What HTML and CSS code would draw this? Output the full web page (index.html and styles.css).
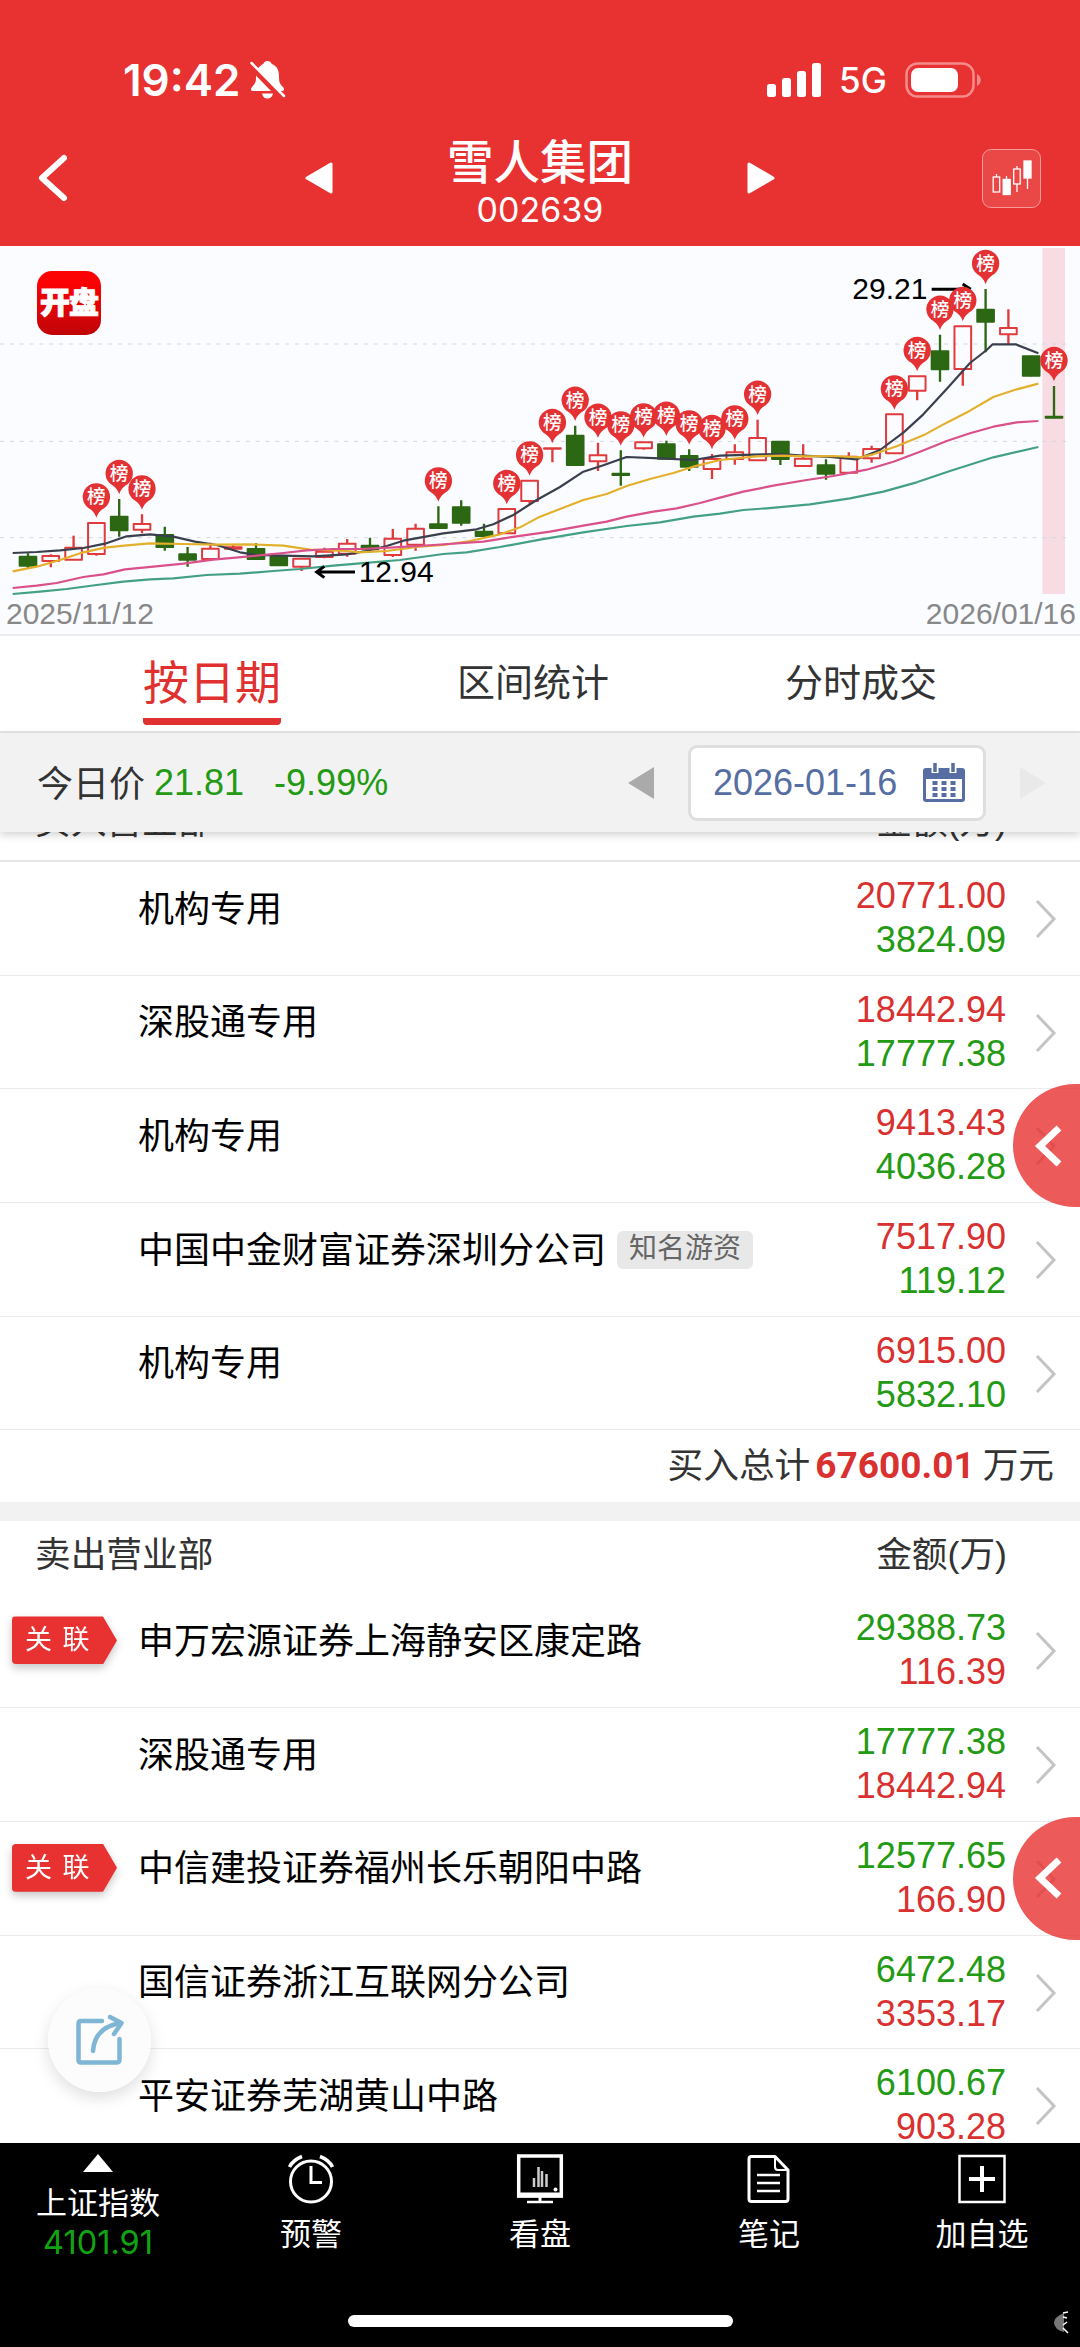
FILE: index.html
```html
<!DOCTYPE html>
<html lang="zh-CN">
<head>
    <meta charset="UTF-8">
    <meta name="viewport" content="width=device-width, initial-scale=1.0">
    <title>雪人集团 002639</title>
    <link rel="stylesheet" href="styles.css">
</head>
<body>

<!-- shared icons -->
<svg width="0" height="0" class="sprite">
    <symbol id="more" viewBox="0 0 22 40"><path d="M2 2 L19 20 L2 38" fill="none" stroke="#c4c4c4" stroke-width="3"/></symbol>
    <symbol id="pull" viewBox="0 0 28 42"><path d="M25 3 L6 21 L25 39" fill="none" stroke="#fff" stroke-width="7"/></symbol>
</svg>

<header class="header">
    <div class="status">
        <span class="time">19:42</span>
        <svg class="bell" width="36" height="40" viewBox="0 0 36 40">
            <path d="M17.500 1 C20 1 21.500 2.500 21.700 4 C27 6 29 10 29 16 C29 23 30 24 33 27 C35 30 34 31 32 31 H3 C1 31 0 29 2 27 C6 23 6 21 6 16 C6 10 9 6 13.300 4 C13.500 2.500 15 1 17.500 1Z M12 33.500 H23 C22 37.500 20 38.500 17.500 38.500 C15 38.500 13 37.500 12 33.500Z" fill="#fff"/>
            <path d="M0 5 L32 38" stroke="#e83131" stroke-width="6"/>
            <path d="M1.500 3 L34 36" stroke="#fff" stroke-width="2.500" stroke-linecap="round"/>
        </svg>
        <svg class="signal" width="54" height="34" viewBox="0 0 54 34" fill="#fff">
            <rect x="0" y="21" width="9" height="13" rx="2.500"/>
            <rect x="15" y="15" width="9" height="19" rx="2.500"/>
            <rect x="30" y="8" width="9" height="26" rx="2.500"/>
            <rect x="45" y="0" width="9" height="34" rx="2.500"/>
        </svg>
        <span class="net">5G</span>
        <svg class="battery" width="78" height="36" viewBox="0 0 78 36">
            <rect x="1.500" y="1.500" width="67" height="33" rx="11" fill="none" stroke="#f58a8a" stroke-width="2.500"/>
            <rect x="6" y="6" width="47" height="24" rx="7" fill="#fff"/>
            <path d="M72 12 C77 14 77 22 72 24Z" fill="#f58a8a"/>
        </svg>
    </div>
    <div class="titlebar">
        <svg class="back" width="34" height="50" viewBox="0 0 34 50"><path d="M28 5 L6 25 L28 45" fill="none" stroke="#fff" stroke-width="6" stroke-linecap="round" stroke-linejoin="round"/></svg>
        <svg class="prev" width="28" height="32" viewBox="0 0 28 32"><path d="M26 2 V30 L2 16Z" fill="#fff" stroke="#fff" stroke-width="3" stroke-linejoin="round"/></svg>
        <div class="stock">
            <h1>雪人集团</h1>
            <span>002639</span>
        </div>
        <svg class="next" width="28" height="32" viewBox="0 0 28 32"><path d="M2 2 V30 L26 16Z" fill="#fff" stroke="#fff" stroke-width="3" stroke-linejoin="round"/></svg>
        <div class="kline-btn">
            <svg width="40" height="36" viewBox="0 0 40 36" stroke="#fff" stroke-width="1.300" fill="none">
                <path d="M4.500 14 V17 M14.500 16 V19 M25 6 V9 M25 24 V32 M35.500 18 V29"/>
                <rect x="1.200" y="17" width="6.500" height="15"/>
                <rect x="11.200" y="19.500" width="7" height="15" fill="#fff"/>
                <rect x="21.700" y="9" width="6.500" height="15"/>
                <rect x="32" y="1" width="7" height="17" fill="#fff"/>
            </svg>
        </div>
    </div>
</header>

<section class="chart">
    <svg id="kline" viewBox="0 3 3240 1164">
        <defs>
            <symbol id="pin" viewBox="-42 -42 84 108" overflow="visible">
                <path d="M0 63 C-6 46 -14 40 -25 33 A41 41 0 1 1 25 33 C14 40 6 46 0 63Z" fill="#e33134"/>
                <text y="20" class="pin-text">榜</text>
            </symbol>
        </defs>
        <rect x="3127" y="9" width="68" height="1038" fill="#f7dde3"/>
        <g stroke="#d3d7dc" stroke-width="3" stroke-dasharray="12 17.500">
            <path d="M0 297 H3200"/>
            <path d="M0 589 H3200"/>
            <path d="M0 878 H3200"/>
        </g>
        <g id="candles"></g>
        <g id="lines" fill="none" stroke-width="6.500" stroke-linejoin="round"></g>
        <g class="peak">
            <text x="2557" y="163">29.21</text>
            <path d="M2795 133 H2905 M2888 117 L2912 133"/>
            <text x="1076" y="1010">12.94</text>
            <path d="M1065 981 H955 M973 964 L950 981 L973 998"/>
        </g>
        <g id="pins"></g>
    </svg>
    <div class="app-logo">开盘</div>
    <div class="dates"><span>2025/11/12</span><span>2026/01/16</span></div>
</section>

<nav class="tabs">
    <a class="tab active">按日期</a>
    <a class="tab">区间统计</a>
    <a class="tab">分时成交</a>
</nav>

<div class="filter">
    <span class="label">今日价</span>
    <span class="price">21.81</span>
    <span class="price pct">-9.99%</span>
    <svg class="day-prev" width="28" height="34" viewBox="0 0 28 34"><path d="M27 1 V33 L1 17Z" fill="#aaa"/></svg>
    <div class="date-box">
        <span>2026-01-16</span>
        <svg width="42" height="40" viewBox="0 0 42 40">
            <path d="M3 5 H39 Q42 5 42 8 V36 Q42 39 39 39 H3 Q0 39 0 36 V8 Q0 5 3 5Z" fill="#566ea2"/>
            <rect x="3" y="16" width="36" height="20" fill="#fff"/>
            <path d="M12 0 V10 M30 0 V10" stroke="#fff" stroke-width="7"/>
            <path d="M12 0 V9 M30 0 V9" stroke="#566ea2" stroke-width="3.500"/>
            <g stroke="#566ea2" stroke-width="4" stroke-dasharray="5 4">
                <path d="M9.500 20 H33 M9.500 26 H33 M9.500 32 H33"/>
            </g>
        </svg>
    </div>
    <svg class="day-next" width="28" height="34" viewBox="0 0 28 34"><path d="M1 1 V33 L27 17Z" fill="#e9e9e9"/></svg>
</div>

<main class="list">
    <div class="scroll">
        <div class="list-head line"><span>买入营业部</span><span>金额(万)</span></div>
        <div class="row">
            <div class="name">机构专用</div>
            <div class="nums"><b class="red">20771.00</b><b class="green">3824.09</b></div>
            <svg class="more"><use href="#more"/></svg>
        </div>
        <div class="row">
            <div class="name">深股通专用</div>
            <div class="nums"><b class="red">18442.94</b><b class="green">17777.38</b></div>
            <svg class="more"><use href="#more"/></svg>
        </div>
        <div class="row">
            <div class="name">机构专用</div>
            <div class="nums"><b class="red">9413.43</b><b class="green">4036.28</b></div>
            <svg class="more"><use href="#more"/></svg>
            <div class="pull"><svg width="28" height="42"><use href="#pull"/></svg></div>
        </div>
        <div class="row">
            <div class="name">中国中金财富证券深圳分公司<span class="tag">知名游资</span></div>
            <div class="nums"><b class="red">7517.90</b><b class="green">119.12</b></div>
            <svg class="more"><use href="#more"/></svg>
        </div>
        <div class="row">
            <div class="name">机构专用</div>
            <div class="nums"><b class="red">6915.00</b><b class="green">5832.10</b></div>
            <svg class="more"><use href="#more"/></svg>
        </div>
        <div class="total">买入总计<strong>67600.01</strong>万元</div>
        <div class="list-head"><span>卖出营业部</span><span>金额(万)</span></div>
        <div class="row">
            <div class="rel"><span>关 联</span></div>
            <div class="name">申万宏源证券上海静安区康定路</div>
            <div class="nums"><b class="green">29388.73</b><b class="red">116.39</b></div>
            <svg class="more"><use href="#more"/></svg>
        </div>
        <div class="row">
            <div class="name">深股通专用</div>
            <div class="nums"><b class="green">17777.38</b><b class="red">18442.94</b></div>
            <svg class="more"><use href="#more"/></svg>
        </div>
        <div class="row">
            <div class="rel"><span>关 联</span></div>
            <div class="name">中信建投证券福州长乐朝阳中路</div>
            <div class="nums"><b class="green">12577.65</b><b class="red">166.90</b></div>
            <svg class="more"><use href="#more"/></svg>
            <div class="pull"><svg width="28" height="42"><use href="#pull"/></svg></div>
        </div>
        <div class="row">
            <div class="name">国信证券浙江互联网分公司</div>
            <div class="nums"><b class="green">6472.48</b><b class="red">3353.17</b></div>
            <svg class="more"><use href="#more"/></svg>
        </div>
        <div class="row">
            <div class="name">平安证券芜湖黄山中路</div>
            <div class="nums"><b class="green">6100.67</b><b class="red">903.28</b></div>
            <svg class="more"><use href="#more"/></svg>
        </div>
    </div>
    <div class="share">
        <svg width="48" height="52" viewBox="0 0 48 52" fill="none" stroke="#7fb5d5" stroke-width="4.500" stroke-linecap="round" stroke-linejoin="round">
            <path d="M26 7 H5 Q2.500 7 2.500 9.500 V46 Q2.500 48.500 5 48.500 H40 Q43.500 48.500 43.500 46 V25"/>
            <path d="M17 37 C18 21 28 12 44 9"/>
            <path d="M34 3 L45.500 9 L38 20"/>
        </svg>
    </div>
</main>

<footer class="toolbar">
    <div class="tool index">
        <svg width="32" height="19" viewBox="0 0 32 19"><path d="M16 0 L31 18 H1Z" fill="#fff"/></svg>
        <span>上证指数</span>
        <span class="index-value">4101.91</span>
    </div>
    <div class="tool">
        <svg width="48" height="50" viewBox="0 0 48 50" fill="none" stroke="#fff" stroke-width="3">
            <circle cx="24" cy="27.500" r="20.500"/>
            <path d="M24 12 V28.500 H35"/>
            <path d="M2.500 13 Q6 6 15 2.500 M45.500 13 Q42 6 33 2.500" stroke-width="3.500"/>
        </svg>
        <span>预警</span>
    </div>
    <div class="tool">
        <svg width="48" height="50" viewBox="0 0 48 50" fill="none" stroke="#fff">
            <path d="M2.700 2 H45.300 V42 H2.700Z" stroke-width="3.500"/>
            <path d="M1 41 H47" stroke-width="5"/>
            <path d="M24 43 V47" stroke-width="3"/>
            <path d="M11 48 H37" stroke-width="2.500"/>
            <path d="M18 24 V33 M22.500 13 V33 M26 17 V33 M30.500 20 V33" stroke="#ccc" stroke-width="2.500"/>
            <circle cx="39.500" cy="35.500" r="2" fill="#fff" stroke="none"/>
        </svg>
        <span>看盘</span>
    </div>
    <div class="tool">
        <svg width="44" height="50" viewBox="0 0 44 50" fill="none" stroke="#fff" stroke-width="3" stroke-linejoin="round">
            <path d="M4.500 2.500 H28 L41 16 V45 Q41 47.500 38.500 47.500 H4.500 Q2 47.500 2 45 V5 Q2 2.500 4.500 2.500Z"/>
            <path d="M28 3 V13 Q28 16 31 16 H41" stroke-width="2"/>
            <path d="M10 21 H33 M10 29 H33 M10 37 H33" stroke-width="2.500"/>
        </svg>
        <span>笔记</span>
    </div>
    <div class="tool">
        <svg width="48" height="50" viewBox="0 0 48 50" fill="none" stroke="#fff">
            <rect x="1.500" y="2" width="45" height="46" stroke-width="2.500"/>
            <path d="M24 12 V38 M11 25 H37" stroke-width="4"/>
        </svg>
        <span>加自选</span>
    </div>
    <div class="home-bar"></div>
    <svg class="corner" width="15" height="24" viewBox="0 0 15 24">
        <path d="M10 2 Q0 6 0 12 Q1 19 10 21Z" fill="#777"/>
        <path d="M9 2 L14 1 M9 6 L13 7 M9 14 L13 11 M9 17 L14 22" stroke="#fff" stroke-width="1.500"/>
    </svg>
</footer>

<script>
    const SVG_NS = "http://www.w3.org/2000/svg";
    const RED = "#e03a3d";
    const GREEN = "#2c6713";

    // [direction, high, body top, body bottom, low, on the list that day]
    const days = [
        ["g", 925, 935, 962, 970], ["r", 928, 933, 948, 967], ["r", 872, 908, 944, 944],
        ["r", 832, 834, 927, 932, 1], ["g", 762, 815, 856, 875, 1], ["r", 808, 837, 854, 865, 1],
        ["g", 845, 870, 906, 917], ["g", 906, 928, 944, 965], ["r", 893, 911, 942, 942],
        ["r", 897, 907, 911, 917], ["g", 895, 912, 942, 945], ["g", 932, 936, 961, 962],
        ["r", 940, 941, 965, 978], ["r", 908, 920, 936, 940], ["r", 882, 896, 926, 935],
        ["g", 878, 902, 913, 915], ["r", 852, 881, 930, 936], ["r", 836, 851, 899, 917],
        ["g", 784, 838, 849, 850, 1], ["g", 766, 787, 833, 842], ["g", 836, 860, 873, 876],
        ["r", 792, 792, 865, 865, 1], ["r", 706, 707, 768, 776, 1], ["r", 609, 610, 611, 652, 1],
        ["g", 542, 572, 660, 662, 1], ["r", 593, 631, 649, 678, 1], ["g", 616, 686, 690, 722, 1],
        ["r", 592, 592, 610, 614, 1], ["g", 587, 598, 641, 641, 1], ["g", 613, 633, 665, 678, 1],
        ["r", 627, 642, 672, 702, 1], ["r", 598, 622, 642, 659, 1], ["r", 524, 579, 646, 646, 1],
        ["g", 590, 590, 642, 660], ["r", 598, 641, 663, 664], ["g", 643, 661, 686, 704],
        ["r", 622, 635, 683, 685], ["r", 602, 612, 640, 653], ["r", 508, 508, 625, 625, 1],
        ["r", 393, 394, 437, 466, 1], ["g", 269, 319, 373, 410, 1], ["r", 243, 244, 372, 422, 1],
        ["g", 132, 194, 230, 322, 1], ["r", 193, 249, 268, 297], ["g", 332, 334, 392, 394],
        ["g", 423, 515, 518, 520, 1]
    ];

    // moving averages
    const averages = {
        "#3a3f4d": "38,924 110,921 180,916 250,909 315,896 380,874 450,868 520,875 585,890 650,900 720,922 770,930 850,932 940,934 1040,928 1100,918 1160,903 1210,887 1330,865 1430,853 1480,838 1540,810 1610,765 1680,726 1750,680 1810,661 1880,636 1980,640 2080,645 2160,632 2260,629 2340,627 2410,632 2490,636 2570,643 2640,615 2710,563 2770,508 2840,432 2910,354 2960,315 2978,298 3047,298 3115,325",
        "#e2b02b": "38,979 110,965 180,945 250,922 315,908 380,901 450,895 550,897 650,899 750,898 850,902 930,914 1040,918 1080,922 1160,918 1250,906 1330,900 1410,888 1500,868 1560,847 1620,815 1680,792 1750,765 1820,747 1880,723 1950,702 2020,684 2080,665 2160,645 2270,634 2350,632 2420,634 2500,633 2580,637 2620,628 2690,604 2770,571 2840,533 2910,497 2980,456 3050,433 3115,416",
        "#d9508a": "38,1029 110,1022 170,1014 250,996 310,988 375,973 460,965 550,956 640,944 740,935 850,924 920,916 1000,912 1080,912 1170,908 1300,900 1450,890 1550,874 1650,860 1750,842 1820,830 1880,815 1960,800 2030,790 2100,774 2160,758 2230,740 2320,722 2420,705 2500,693 2600,674 2680,650 2760,620 2840,588 2910,565 2980,545 3050,532 3115,528",
        "#44a083": "38,1047 120,1040 200,1032 290,1020 370,1010 450,1003 520,1000 620,990 720,986 820,978 900,972 1000,962 1080,955 1200,945 1330,927 1400,922 1500,906 1620,884 1750,862 1880,843 1980,832 2080,815 2160,806 2230,795 2300,790 2430,778 2550,760 2650,740 2750,712 2850,678 2980,637 3115,606"
    };

    function add(parent, tag, attrs) {
        const el = document.createElementNS(SVG_NS, tag);
        for (const key in attrs) {
            el.setAttribute(key, attrs[key]);
        }
        document.getElementById(parent).appendChild(el);
    }

    days.forEach(([dir, high, top, bottom, low, listed], i) => {
        const x = 84 + 68.4 * i;
        const color = dir === "r" ? RED : GREEN;
        add("candles", "path", {
            d: `M${x} ${high} V${top} M${x} ${bottom} V${low}`,
            stroke: color, "stroke-width": 7
        });
        add("candles", "rect", {
            x: x - 25, y: top, width: 50, height: bottom - top,
            fill: dir === "r" ? "none" : GREEN,
            stroke: color, "stroke-width": 6, "stroke-linejoin": "round"
        });
        if (listed) {
            add("pins", "use", { href: "#pin", x: x - 42, y: high - 77 - 42, width: 84, height: 108 });
        }
    });

    for (const color in averages) {
        add("lines", "polyline", { points: averages[color], stroke: color });
    }
</script>

</body>
</html>
```
FILE: styles.css
```css
* {
    box-sizing: border-box;
}
body {
    margin: 0;
    width: 1080px;
    height: 2347px;
    overflow: hidden;
    display: flex;
    flex-direction: column;
    background: #fff;
    color: #333;
    font-family: "Liberation Sans", "Noto Sans CJK SC", sans-serif;
}
svg {
    display: block;
    flex: none;
}
.sprite {
    position: absolute;
}

/* header */
.header {
    height: 246px;
    flex: none;
    background: #e83131;
    color: #fff;
}
.status {
    height: 110px;
    padding: 49px 97px 0 123px;
    display: flex;
    align-items: center;
}
.time {
    font: 600 44px/60px "Inter", sans-serif;
    width: 116px;
}
.bell {
    margin-left: 11px;
}
.signal {
    margin-left: auto;
}
.net {
    font: 500 35px/60px "Inter", sans-serif;
    margin: 0 17px 0 18px;
    width: 49px;
}
.titlebar {
    height: 136px;
    display: flex;
    align-items: center;
    padding: 0 39px 0 36px;
}
.prev {
    margin-left: 235px;
}
.stock {
    width: 414px;
    text-align: center;
    padding-top: 10px;
}
.stock h1 {
    margin: 0;
    font-size: 46.500px;
    line-height: 54px;
    font-weight: 500;
}
.stock span {
    display: block;
    font: 400 34px/40px "Inter", sans-serif;
}
.kline-btn {
    width: 59px;
    height: 59px;
    margin-left: auto;
    border: 1px solid #f79a9a;
    border-radius: 9px;
    background: #ea4747;
    display: flex;
    align-items: center;
    justify-content: center;
}

/* chart */
.chart {
    position: relative;
    height: 390px;
    flex: none;
    background: #fbfcff;
    border-bottom: 2px solid #e9ebee;
}
#kline {
    width: 1080px;
    height: 388px;
    font-family: "Liberation Sans", "Noto Sans CJK SC", sans-serif;
}
.pin-text {
    font: 500 56px "Noto Sans CJK SC", sans-serif;
    fill: #fff;
    text-anchor: middle;
}
.peak text {
    font-size: 90px;
    fill: #000;
}
.peak path {
    fill: none;
    stroke: #000;
    stroke-width: 9;
}
.app-logo {
    position: absolute;
    left: 37px;
    top: 25px;
    width: 64px;
    height: 64px;
    border-radius: 15px;
    background: linear-gradient(#fb0204 20%, #c00508);
    color: #fff;
    font-size: 30px;
    font-weight: 900;
    line-height: 64px;
    text-align: center;
    letter-spacing: -1px;
    -webkit-text-stroke: 1px #fff;
}
.dates {
    position: absolute;
    left: 6px;
    right: 4px;
    bottom: 3px;
    display: flex;
    justify-content: space-between;
    color: #888;
    font-size: 30px;
    line-height: 34px;
}

/* tabs */
.tabs {
    height: 97px;
    flex: none;
    display: grid;
    grid-template-columns: 424px 218px 1fr;
    justify-items: center;
    border-bottom: 2px solid #e6e6e6;
}
.tab {
    font-size: 38px;
    line-height: 95px;
    height: 89px;
    white-space: nowrap;
}
.tab.active {
    font-size: 46px;
    color: #e03030;
    border-bottom: 7px solid #e03030;
    border-radius: 4px;
}

/* price and date */
.filter {
    position: relative;
    z-index: 1;
    height: 99px;
    flex: none;
    display: flex;
    align-items: center;
    padding: 0 33px 0 37px;
    background: #f2f2f2;
    box-shadow: 0 3px 8px rgba(0, 0, 0, 0.18);
    font-size: 36px;
}
.label {
    margin-top: -4px;
}
.price {
    margin-left: 9px;
    color: #239a13;
}
.pct {
    margin-left: 30px;
}
.day-prev {
    margin-left: auto;
}
.date-box {
    width: 298px;
    height: 76px;
    margin: 0 33px;
    padding: 0 18px 0 22px;
    border: 3px solid #dedede;
    border-radius: 9px;
    background: #fff;
    color: #566ea2;
    display: flex;
    align-items: center;
    justify-content: space-between;
}

/* broker list */
.list {
    position: relative;
    height: 1311px;
    flex: none;
    overflow: hidden;
}
.scroll {
    margin-top: -44px;
    font-size: 36px;
}
.list-head {
    height: 73px;
    padding: 0 73px 0 35px;
    display: flex;
    justify-content: space-between;
    font-size: 35.700px;
    line-height: 69px;
}
.line {
    height: 74px;
    border-bottom: 2px solid #e6e6e6;
}
.row {
    position: relative;
    height: 113.700px;
    display: flex;
    border-bottom: 1.500px solid #ebebeb;
    padding: 0 23px 0 138px;
    color: #000;
}
.name {
    flex: 1;
    display: flex;
    height: 87px;
    align-items: center;
    white-space: nowrap;
}
.tag {
    margin: 7px 0 0 11px;
    padding: 0 12px;
    height: 38px;
    line-height: 35px;
    border-radius: 6px;
    background: #e8e8e8;
    color: #666;
    font-size: 28px;
}
.nums {
    padding-top: 12px;
    font-size: 36px;
    line-height: 44px;
    text-align: right;
}
.nums b {
    display: block;
    font-weight: 400;
}
.red {
    color: #d93030;
}
.green {
    color: #239a13;
}
.more {
    width: 22px;
    height: 40px;
    margin: 37px 0 0 29px;
}
.rel {
    position: absolute;
    left: 12px;
    top: 22px;
    filter: drop-shadow(0 4px 4px rgba(0, 0, 0, 0.22));
}
.rel span {
    display: block;
    width: 105px;
    height: 48px;
    padding-left: 13px;
    background: #e83131;
    border-radius: 4px;
    clip-path: polygon(0 0, 91px 0, 100% 50%, 91px 100%, 0 100%);
    color: #fff;
    font-size: 27px;
    line-height: 48px;
    word-spacing: 3px;
}
.pull {
    position: absolute;
    right: 0;
    top: -5px;
    z-index: 1;
    width: 67px;
    height: 123px;
    border-radius: 62px 0 0 62px / 61.500px 0 0 61.500px;
    background: rgba(232, 49, 49, 0.8);
    display: flex;
    align-items: center;
    padding-left: 21px;
}
.total {
    height: 91px;
    padding-right: 26px;
    border-bottom: 19px solid #f2f2f2;
    font-size: 35.700px;
    text-align: right;
    line-height: 72px;
}
.total strong {
    margin: 0 8px 0 5px;
    color: #d93030;
    font-family: "Roboto", sans-serif;
    font-size: 37px;
}
.share {
    position: absolute;
    left: 48px;
    top: 1156px;
    width: 103px;
    height: 104px;
    border-radius: 50%;
    background: rgba(252, 252, 252, 0.95);
    box-shadow: 0 6px 16px rgba(0, 0, 0, 0.13);
    display: flex;
    align-items: center;
    justify-content: center;
}

/* bottom toolbar */
.toolbar {
    position: relative;
    height: 204px;
    flex: none;
    background: #000;
    color: #fff;
    display: grid;
    grid-template-columns: 196px 230px 228px 230px 196px;
}
.tool {
    display: flex;
    flex-direction: column;
    align-items: center;
    padding-top: 11px;
    font-size: 31px;
    line-height: 40px;
}
.tool span {
    margin-top: 11px;
}
.tool.index .index-value {
    margin-top: -1px;
    color: #12a312;
    font-family: "Inter", sans-serif;
    font-size: 32.500px;
}
.home-bar {
    position: absolute;
    left: 348px;
    bottom: 20px;
    width: 385px;
    height: 12px;
    border-radius: 6px;
    background: #fff;
}
.corner {
    position: absolute;
    left: 1054px;
    bottom: 12px;
}
```
